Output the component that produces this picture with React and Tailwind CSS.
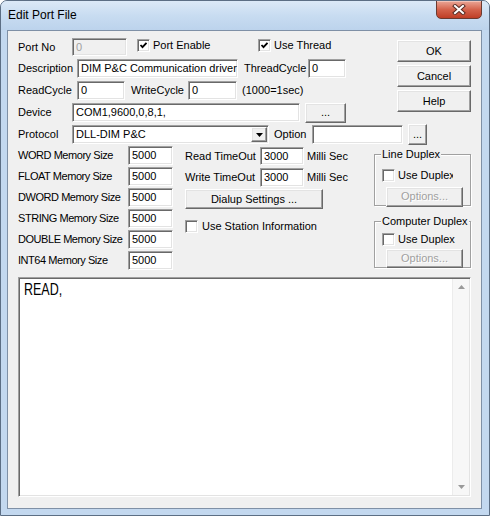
import React from "react";

// classic win32 sunken edit box
const Field = ({ className = "", value = "", disabled = false }) => (
  <div
    className={`shrink-0 flex items-center overflow-hidden whitespace-nowrap border border-t-[#a0a0a0] border-l-[#a0a0a0] border-b-white border-r-white shadow-[inset_1px_1px_0_#696969,inset_-1px_-1px_0_#e3e3e3] pl-[3px] ${
      disabled ? "bg-[#f0f0f0] text-[#a0a0a0]" : "bg-white text-black"
    } ${className}`}
  >
    {value}
  </div>
);

const Btn = ({ className = "", children, disabled = false }) => (
  <div
    className={`shrink-0 flex items-center justify-center bg-[#f0f0f0] border border-t-white border-l-white border-b-[#696969] border-r-[#696969] shadow-[inset_-1px_-1px_0_#a0a0a0,inset_1px_1px_0_#e3e3e3] ${
      disabled ? "text-[#a0a0a0] [text-shadow:1px_1px_0_#ffffff]" : "text-black"
    } ${className}`}
  >
    {children}
  </div>
);

const Check = ({ checked = false }) => (
  <div className="w-[13px] h-[13px] shrink-0 flex items-center justify-center bg-white border border-t-[#a0a0a0] border-l-[#a0a0a0] border-b-white border-r-white shadow-[inset_1px_1px_0_#696969,inset_-1px_-1px_0_#e3e3e3]">
    {checked && (
      <svg width="9" height="9" viewBox="0 0 9 9">
        <path d="M1.5 4 L3.5 6.2 L7.5 1.8" fill="none" stroke="#000" strokeWidth="1.8" />
      </svg>
    )}
  </div>
);

const CheckLabel = ({ checked, label, className = "", labelClass = "" }) => (
  <div className={`shrink-0 flex items-center ${className}`}>
    <Check checked={checked} />
    <span className={`ml-[3px] whitespace-nowrap ${labelClass}`}>{label}</span>
  </div>
);

const GroupBox = ({ title, className = "", children }) => (
  <div className={`relative border border-[#a0a0a0] shadow-[inset_1px_1px_0_#ffffff,1px_1px_0_#ffffff] ${className}`}>
    <span className="absolute -top-[8px] left-[6px] px-[1px] bg-[#f0f0f0] whitespace-nowrap leading-[14px]">
      {title}
    </span>
    {children}
  </div>
);

const memoryRows = ["WORD", "FLOAT", "DWORD", "STRING", "DOUBLE", "INT64"];

export default function App() {
  return (
    <div className="w-[490px] h-[516px] flex flex-col rounded-t-[7px] border border-[#5c6e84] bg-[#c3d8ef] font-['Liberation_Sans',Arial,sans-serif] text-[11px] text-black overflow-hidden">
      {/* title bar */}
      <div className="h-[29px] flex items-start bg-linear-to-b from-[#dce9f7] via-[#c8dcf1] to-[#bcd3ec]">
        <span className="ml-[7px] mt-[7px] text-[12px] leading-[15px] text-black">Edit Port File</span>
        <div className="flex-1" />
        <div className="w-[46px] h-[19px] mr-[7px] -mt-px rounded-b-[5px] border border-[#6b3a30] bg-linear-to-b from-[#e9a697] via-[#d4634c] to-[#bf3d25] flex items-center justify-center shadow-[inset_0_1px_0_#f3c2b6]">
          <svg width="14" height="11" viewBox="0 0 14 11">
            <path d="M3 2 L11 9 M11 2 L3 9" stroke="#5a2d25" strokeWidth="4" strokeLinecap="square" />
            <path d="M3 2 L11 9 M11 2 L3 9" stroke="#ffffff" strokeWidth="2" strokeLinecap="square" />
          </svg>
        </div>
      </div>

      {/* client area */}
      <div className="ml-[6px] mr-[7px] h-[479px] border border-[#7f90a6] bg-[#f0f0f0] pl-[10px] pt-[7px]">
        {/* upper block */}
        <div className="flex items-start">
          <div className="w-[379px] shrink-0">
            <div className="w-max h-[18px] flex items-center">
              <span className="w-[54px] shrink-0">Port No</span>
              <Field className="w-[55px] h-[18px]" value="0" disabled />
              <CheckLabel className="ml-[10px] w-[121px] -mt-[3px]" checked label="Port Enable" />
              <CheckLabel className="-mt-[3px]" checked label="Use Thread" />
            </div>
            <div className="w-max mt-[3px] h-[19px] flex items-center">
              <span className="w-[59px] shrink-0">Description</span>
              <Field className="w-[161px] h-[19px]" value="DIM P&C Communication driver" />
              <span className="ml-[6px] w-[64px] shrink-0">ThreadCycle</span>
              <Field className="w-[38px] h-[19px]" value="0" />
            </div>
            <div className="w-max mt-[3px] h-[19px] flex items-center">
              <span className="w-[59px] shrink-0">ReadCycle</span>
              <Field className="w-[48px] h-[19px]" value="0" />
              <span className="ml-[6px] w-[57px] shrink-0">WriteCycle</span>
              <Field className="w-[49px] h-[19px]" value="0" />
              <span className="ml-[5px]">(1000=1sec)</span>
            </div>
            <div className="w-max mt-[3px] h-[19px] flex items-center">
              <span className="w-[54px] shrink-0">Device</span>
              <Field className="w-[228px] h-[19px]" value="COM1,9600,0,8,1," />
              <Btn className="ml-[5px] w-[41px] h-[20px]">...</Btn>
            </div>
            <div className="w-max mt-[2px] h-[21px] flex items-center">
              <span className="w-[54px] shrink-0">Protocol</span>
              <div className="shrink-0 w-[197px] h-[19px] flex items-center bg-white border border-t-[#a0a0a0] border-l-[#a0a0a0] border-b-white border-r-white shadow-[inset_1px_1px_0_#696969,inset_-1px_-1px_0_#e3e3e3] pl-[3px] pr-[1px]">
                <span className="flex-1 whitespace-nowrap">DLL-DIM P&C</span>
                <Btn className="w-[16px] h-[15px]">
                  <svg width="7" height="4" viewBox="0 0 7 4">
                    <path d="M0 0 H7 L3.5 4 Z" fill="#000" />
                  </svg>
                </Btn>
              </div>
              <span className="ml-[5px] w-[38px] shrink-0">Option</span>
              <Field className="w-[91px] h-[19px]" />
              <Btn className="ml-[5px] w-[19px] h-[21px]">...</Btn>
            </div>
          </div>
          <div className="mt-[2px] w-[74px] flex flex-col gap-[3px]">
            <Btn className="h-[22px]">OK</Btn>
            <Btn className="h-[22px]">Cancel</Btn>
            <Btn className="h-[22px]">Help</Btn>
          </div>
        </div>

        {/* lower block */}
        <div className="mt-[1px] flex items-start">
          <div className="w-[155px] shrink-0 flex flex-col gap-[2px]">
            {memoryRows.map((name) => (
              <div key={name} className="h-[19px] flex items-center">
                <span className="w-[110px] shrink-0 whitespace-nowrap tracking-[-0.45px]">{name} Memory Size</span>
                <Field className="w-[45px] h-[19px]" value="5000" />
              </div>
            ))}
          </div>

          <div className="ml-[12px] w-[189px] shrink-0 pt-[1px]">
            <div className="h-[18px] flex items-center">
              <span className="w-[75px] shrink-0">Read TimeOut</span>
              <Field className="w-[44px] h-[18px]" value="3000" />
              <span className="ml-[3px] whitespace-nowrap">Milli Sec</span>
            </div>
            <div className="mt-[3px] h-[19px] flex items-center">
              <span className="w-[75px] shrink-0">Write TimeOut</span>
              <Field className="w-[44px] h-[19px]" value="3000" />
              <span className="ml-[3px] whitespace-nowrap">Milli Sec</span>
            </div>
            <Btn className="mt-[2px] w-[138px] h-[20px]">Dialup Settings ...</Btn>
            <CheckLabel className="mt-[9px]" label="Use Station Information" labelClass="ml-[4px]" />
          </div>

          <div className="w-[97px] shrink-0">
            <GroupBox title="Line Duplex" className="mt-[8px] h-[52px] pl-[7px] pt-[12px]">
              <div className="flex items-center">
                <Check />
                <span className="ml-[3px] w-[55px] overflow-hidden whitespace-nowrap">Use Duplex</span>
              </div>
              <Btn className="mt-[3px] ml-[4px] w-[77px] h-[20px]" disabled>
                Options...
              </Btn>
            </GroupBox>
            <GroupBox title="Computer Duplex" className="mt-[15px] h-[47px] pl-[7px] pt-[9px]">
              <CheckLabel label="Use Duplex" />
              <Btn className="mt-[1px] ml-[4px] w-[77px] h-[19px]" disabled>
                Options...
              </Btn>
            </GroupBox>
          </div>
        </div>

        {/* script editor */}
        <div className="mt-[7px] w-[453px] h-[220px] flex border border-t-[#a0a0a0] border-l-[#a0a0a0] border-b-white border-r-white shadow-[inset_1px_1px_0_#696969,inset_-1px_-1px_0_#e3e3e3] bg-white">
          <div className="flex-1 pl-[5px] pt-[3px] text-[16px] leading-[18px]">
            <span className="inline-block origin-left scale-x-[0.78]">READ,</span>
          </div>
          <div className="w-[17px] mt-[1px] mb-[1px] mr-[1px] bg-[#f7f7f7] border-l border-[#ececec] flex flex-col justify-between items-center py-[6px]">
            <svg width="7" height="4" viewBox="0 0 7 4">
              <path d="M0 4 H7 L3.5 0 Z" fill="#9a9a9a" />
            </svg>
            <svg width="7" height="4" viewBox="0 0 7 4">
              <path d="M0 0 H7 L3.5 4 Z" fill="#9a9a9a" />
            </svg>
          </div>
        </div>
      </div>
    </div>
  );
}
